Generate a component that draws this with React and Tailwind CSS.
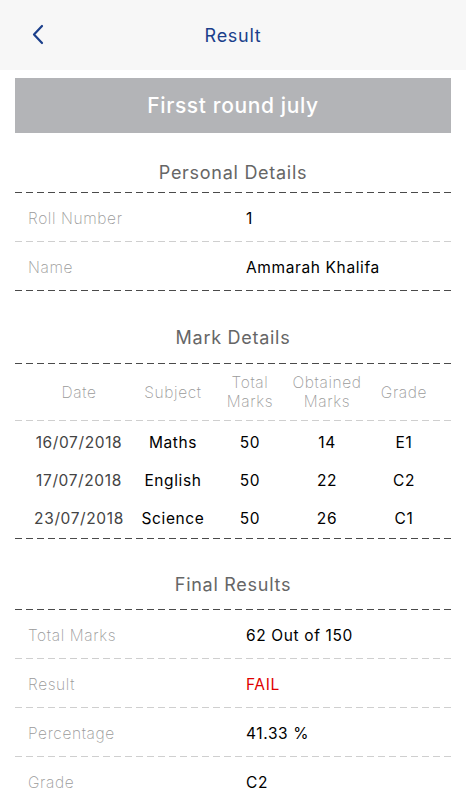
import React from "react";

const FONT = { fontFamily: "Inter, 'Noto Sans', sans-serif" };

function Dash({ dark }) {
  return dark ? (
    <div className="mx-[15px] h-px bg-[repeating-linear-gradient(to_right,#4a4a4a_0_7px,transparent_7px_11px)]" />
  ) : (
    <div className="mx-[15px] h-px bg-[repeating-linear-gradient(to_right,#cfcfcf_0_7px,transparent_7px_11px)]" />
  );
}

function InfoRow({ label, value, red }) {
  return (
    <div className="grid h-[48px] grid-cols-[218px_1fr] items-center pl-[28px] pt-[3px] text-[15.5px] tracking-[0.04em]">
      <div className="font-extralight text-[#9a9a9a]">{label}</div>
      <div className={"font-normal " + (red ? "text-[#e00000]" : "text-[#000]")}>{value}</div>
    </div>
  );
}

function Cell({ children, className }) {
  return <div className={"flex justify-center text-center whitespace-nowrap " + (className || "")}>{children}</div>;
}

const marks = [
  ["16/07/2018", "Maths", "50", "14", "E1"],
  ["17/07/2018", "English", "50", "22", "C2"],
  ["23/07/2018", "Science", "50", "26", "C1"],
];

export default function App() {
  return (
    <div className="min-h-[800px] w-[466px] bg-white" style={FONT}>
      <div className="relative flex h-[70px] items-center justify-center bg-[#f7f7f7]">
        <svg className="absolute left-[31px] top-[24px]" width="14" height="21" viewBox="0 0 14 21" fill="none">
          <path d="M11 2 L3 10.5 L11 19" stroke="#1b3f8b" strokeWidth="2.2" strokeLinecap="round" strokeLinejoin="round" />
        </svg>
        <div className="text-[18px] font-normal tracking-[0.04em] text-[#1b3f8b]">Result</div>
      </div>

      <div className="mx-[15px] mt-[8px] flex h-[55px] items-center justify-center bg-[#b3b4b7]">
        <div className="text-[21px] font-medium tracking-[0.03em] text-white">Firsst round july</div>
      </div>

      <div className="pt-[28px] pb-[7px] text-center text-[18px] leading-[24px] tracking-[0.04em] text-[#666]">Personal Details</div>
      <Dash dark />
      <InfoRow label="Roll Number" value="1" />
      <Dash />
      <InfoRow label="Name" value="Ammarah Khalifa" />
      <Dash dark />

      <div className="pt-[35px] pb-[13px] text-center text-[18px] leading-[24px] tracking-[0.04em] text-[#666]">Mark Details</div>
      <Dash dark />
      <div className="mx-[15px] grid h-[56px] grid-cols-[128px_60px_94px_60px_94px] items-center text-[15.5px] font-extralight leading-[19px] tracking-[0.04em] text-[#9a9a9a]">
        <Cell>Date</Cell>
        <Cell>Subject</Cell>
        <Cell>
          Total
          <br />
          Marks
        </Cell>
        <Cell>
          Obtained
          <br />
          Marks
        </Cell>
        <Cell>Grade</Cell>
      </div>
      <Dash />
      <div className="mx-[15px] pt-[3px]">
        {marks.map((r) => (
          <div key={r[0]} className="grid h-[38px] grid-cols-[128px_60px_94px_60px_94px] items-center text-[15.5px] tracking-[0.04em]">
            <Cell className="text-[#444]">{r[0]}</Cell>
            <Cell className="text-[#000]">{r[1]}</Cell>
            <Cell className="text-[#000]">{r[2]}</Cell>
            <Cell className="text-[#000]">{r[3]}</Cell>
            <Cell className="text-[#000]">{r[4]}</Cell>
          </div>
        ))}
      </div>
      <Dash dark />

      <div className="pt-[34px] pb-[12px] text-center text-[18px] leading-[24px] tracking-[0.04em] text-[#666]">Final Results</div>
      <Dash dark />
      <InfoRow label="Total Marks" value="62 Out of 150" />
      <Dash />
      <InfoRow label="Result" value="FAIL" red />
      <Dash />
      <InfoRow label="Percentage" value="41.33 %" />
      <Dash />
      <InfoRow label="Grade" value="C2" />
    </div>
  );
}
